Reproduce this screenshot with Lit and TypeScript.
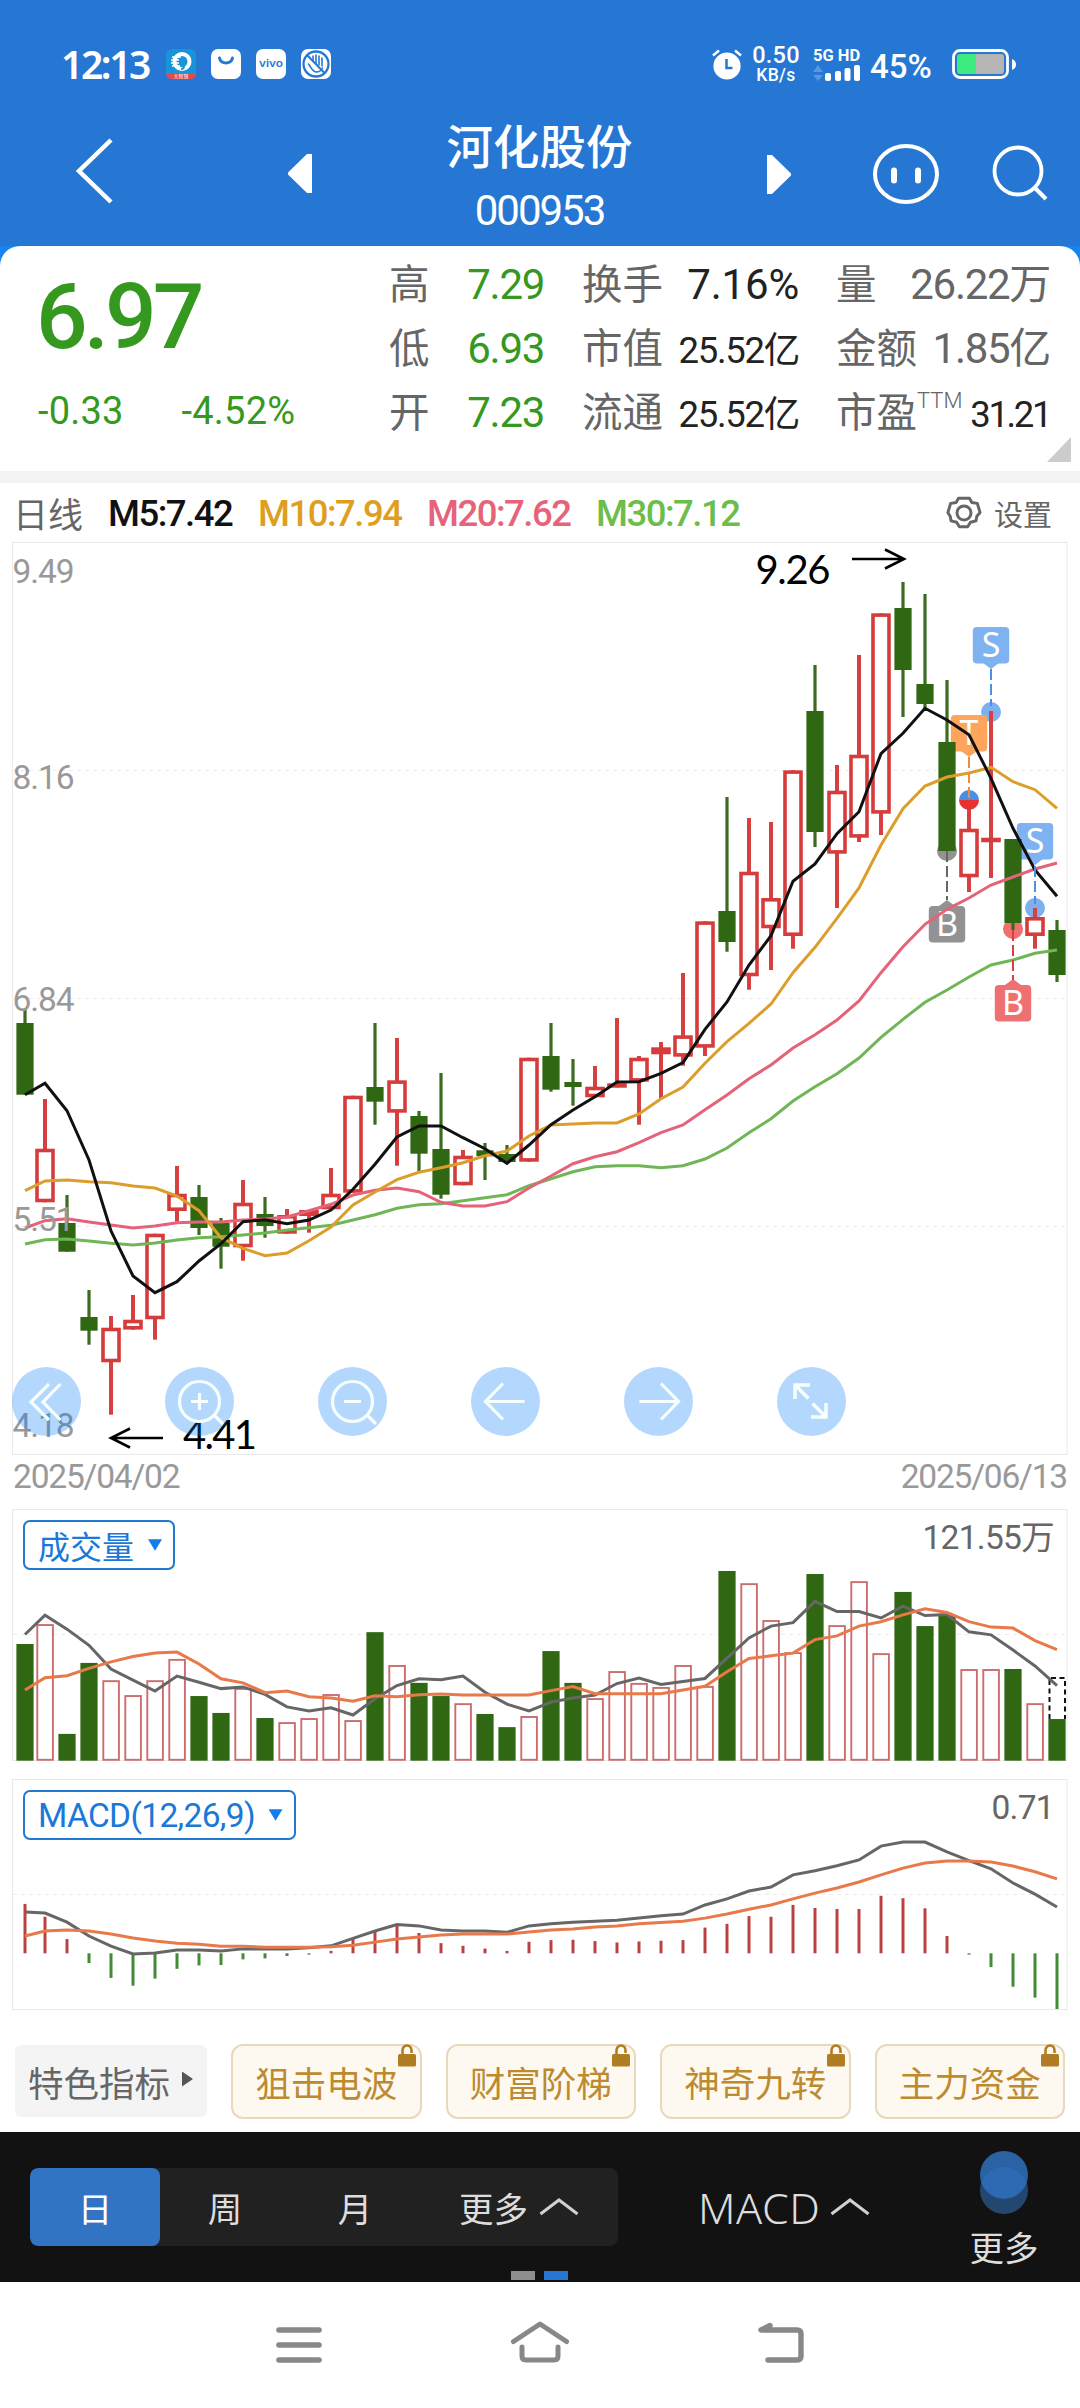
import { LitElement, html, svg, css } from "lit";
import { customElement, property } from "lit/decorators.js";
import { classMap } from "lit/directives/class-map.js";

type Candle = [up: 0 | 1, high: number, top: number, bottom: number, low: number];

const candles: Candle[] = [
  [0, 1009, 1023, 1094.7, 1094.7], [1, 1099, 1148.7, 1202.3, 1202.3], [0, 1195, 1223, 1251.7, 1251.7],
  [0, 1290, 1317, 1330.7, 1344.7], [1, 1316, 1327.7, 1362.3, 1414.7], [1, 1295, 1319.7, 1329.6, 1329.6],
  [1, 1233.7, 1233.7, 1319.3, 1339.7], [1, 1166, 1193.7, 1211, 1221.7], [0, 1185, 1197, 1228, 1235],
  [0, 1218, 1223, 1246.7, 1268.7], [1, 1180, 1202.7, 1247.3, 1260.7], [0, 1197, 1214, 1226, 1237.7],
  [1, 1209, 1215, 1233.7, 1233.7], [1, 1210, 1210, 1216, 1232.7], [1, 1168, 1193.7, 1209.3, 1209.3],
  [1, 1095.7, 1095.7, 1192.7, 1192.7], [0, 1023, 1087, 1101.7, 1124.7], [1, 1038, 1080.3, 1112.7, 1165.7],
  [0, 1111, 1116, 1153.7, 1171.7], [0, 1073, 1149, 1194.7, 1198.7], [1, 1150, 1155.7, 1185.3, 1185.3],
  [0, 1143, 1150.3, 1156.3, 1180], [0, 1145, 1154, 1162, 1162], [1, 1057.7, 1057.7, 1161.7, 1161.7],
  [0, 1023, 1056, 1089.7, 1091.7], [0, 1059, 1082, 1087, 1105.7], [1, 1066, 1086.7, 1097.3, 1097.3],
  [1, 1018, 1083.3, 1087.3, 1087.3], [1, 1056, 1057.7, 1081.7, 1124.7], [1, 1042, 1047.3, 1054.3, 1099],
  [1, 973, 1035.3, 1056.7, 1065.7], [1, 921.3, 921.3, 1047.7, 1056], [0, 797, 911, 942, 951.7],
  [1, 818, 871.7, 976.3, 989.7], [1, 822, 898, 928.3, 970], [1, 770.3, 770.3, 936, 948.7],
  [0, 665, 711, 832, 847], [1, 765, 790.7, 853.7, 908], [1, 655, 754.7, 837.7, 842],
  [1, 613.3, 613.3, 813.7, 835], [0, 582, 608, 670, 717], [0, 594, 684, 704, 708],
  [0, 680, 742, 851, 851], [1, 808, 828.7, 877.3, 892], [1, 711, 837.7, 842.3, 878],
  [0, 839, 839, 923, 930], [1, 908, 917, 936, 948.7], [0, 920, 930, 975, 982],
];

const averages: [color: string, values: number[]][] = [
  ["#6fb657", [1244, 1239.7, 1239, 1241, 1243.3, 1245, 1243, 1240, 1237.7, 1236.7, 1235, 1233, 1230, 1227.7, 1225.3, 1220, 1214.7, 1208.3, 1204.7, 1203.7, 1200.7, 1197.7, 1194.7, 1185.7, 1178.7, 1171.7, 1166.7, 1165.7, 1165.7, 1167.7, 1165.7, 1159, 1148, 1132.7, 1118.7, 1101, 1086.7, 1073.7, 1058, 1037.3, 1019.3, 1002.3, 990, 977, 965, 960, 953.3, 950]],
  ["#e4637a", [1228, 1220.7, 1218.7, 1222, 1225, 1228, 1226, 1222.7, 1222, 1222, 1220, 1219, 1217, 1210.7, 1204.3, 1195, 1190.3, 1188, 1191.7, 1202.3, 1206, 1206, 1201.7, 1188, 1176, 1163.7, 1156.7, 1151.7, 1142.7, 1132.7, 1125, 1109.7, 1095, 1078.7, 1065, 1048, 1034.7, 1020, 1001, 972.7, 946.7, 924.3, 909.3, 898, 885, 877, 869, 863]],
  ["#dc9e2b", [1190.7, 1181, 1180, 1181.7, 1182.7, 1186, 1188, 1196, 1210.7, 1237.7, 1248.3, 1255.7, 1253, 1240.7, 1227, 1205, 1192, 1179.7, 1172.3, 1167.7, 1162.7, 1155.7, 1151, 1136, 1125, 1124, 1123, 1123, 1114, 1098.7, 1087, 1063.3, 1041.7, 1023.3, 1004, 972.7, 947.3, 918.3, 888, 845, 808.7, 786, 777, 773, 767.3, 781.7, 789.7, 808.3]],
  ["#111111", [1094.7, 1083.3, 1110.7, 1160, 1231, 1276, 1292.7, 1281.7, 1261, 1243.7, 1221.7, 1219.7, 1223.7, 1220, 1210, 1189.3, 1164.3, 1137, 1126, 1126, 1137.7, 1148.7, 1163.3, 1145, 1124.7, 1110, 1096.7, 1082, 1081.7, 1073.3, 1062.7, 1029.3, 1002, 965, 935.7, 881.3, 864, 833.7, 811.7, 753.7, 733.3, 708.3, 720, 734.7, 778.3, 828.3, 870, 896.3]],
];

/* The lower panes are sampled on a finer vertical grid; STEP turns a sample into pixels. */
const STEP = 1 / 2.9585;
const volumeTops = [426, 367, 692, 482, 533, 577, 533, 470, 580, 630, 556, 645, 657, 645, 574, 651, 391, 488, 541, 580, 601, 633, 672, 639, 447, 541, 586, 506, 541, 553, 488, 550, 210, 246, 355, 450, 219, 370, 240, 453, 272, 373, 341, 500, 500, 500, 601, 648];
const volumeFast = [398, 341, 382, 430, 500, 533, 565, 521, 539, 558, 553, 575, 612, 624, 615, 636, 588, 549, 529, 532, 521, 569, 604, 624, 598, 586, 577, 543, 527, 546, 537, 528, 468, 408, 373, 363, 300, 330, 330, 349, 314, 342, 339, 390, 399, 444, 491, 549];
const volumeSlow = [562, 526, 520, 498, 479, 463, 453, 450, 485, 529, 541, 570, 565, 582, 586, 595, 579, 582, 576, 574, 577, 577, 577, 577, 564, 552, 573, 573, 573, 573, 562, 551, 508, 469, 461, 453, 413, 402, 373, 360, 340, 322, 333, 360, 376, 379, 416, 443];
const macdBars = [1195, 1233, 1299, 1370, 1414, 1437, 1416, 1387, 1377, 1376, 1359, 1356, 1349, 1345, 1334, 1297, 1275, 1259, 1281, 1311, 1319, 1327, 1334, 1307, 1302, 1301, 1305, 1309, 1306, 1304, 1302, 1265, 1254, 1231, 1233, 1198, 1207, 1210, 1210, 1171, 1178, 1208, 1290, 1345, 1382, 1440, 1472, 1506];
const macdDif = [1219, 1222, 1249, 1290, 1320, 1343, 1340, 1331, 1331, 1334, 1328, 1328, 1328, 1325, 1319, 1297, 1275, 1256, 1260, 1272, 1275, 1275, 1279, 1260, 1254, 1249, 1246, 1243, 1237, 1230, 1225, 1198, 1180, 1157, 1145, 1109, 1097, 1082, 1065, 1024, 1012, 1012, 1041, 1067, 1091, 1133, 1166, 1204];
const macdDea = [1290, 1275, 1272, 1275, 1284, 1296, 1305, 1311, 1314, 1320, 1320, 1323, 1323, 1323, 1322, 1317, 1308, 1299, 1293, 1287, 1284, 1284, 1284, 1278, 1272, 1269, 1263, 1260, 1254, 1250, 1246, 1237, 1225, 1211, 1198, 1180, 1163, 1148, 1130, 1109, 1089, 1074, 1068, 1068, 1071, 1083, 1100, 1121];

const xAt = (i: number) => (i === 0 ? 25 : 23 + 22 * i);
const points = (values: number[], k = 1) => values.map((v, i) => `${xAt(i)},${v * k}`).join(" ");
const line = (values: number[], color: string, k = 1) =>
  svg`<polyline points=${points(values, k)} fill="none" stroke=${color} stroke-width="3" />`;
const frame = (top: number, bottom: number, grid: number[]) => svg`
  <rect x="12.5" y=${top} width="1054.5" height=${bottom - top} fill="none" stroke="#eaeaea" />
  ${grid.map((y) => svg`<line x1="13" x2="1067" y1=${y} y2=${y} stroke="#ececec" stroke-dasharray="4 4" />`)}`;

@customElement("status-bar")
export class StatusBar extends LitElement {
  static styles = css`
    :host { display: flex; height: 80px; padding: 24px 64px 0 61px; align-items: center; justify-content: space-between; color: #fff; font-family: Roboto, "Liberation Sans", sans-serif; box-sizing: content-box; }
    .side { display: flex; align-items: center; }
    .time { font: 600 39px "Noto Sans", sans-serif; line-height: 40px; letter-spacing: -2.4px; width: 105px; white-space: nowrap; }
    .apps { display: flex; gap: 15px; }
    .speed { width: 50px; margin-left: 9px; text-align: center; font-weight: 500; white-space: nowrap; }
    .rate { font-size: 23.5px; line-height: 20px; letter-spacing: 0.2px; }
    .unit { font-size: 17.5px; line-height: 18px; letter-spacing: 0.4px; margin-top: 1px; }
    .net { margin: 0 7px 0 12px; width: 50px; }
    .gen { font-size: 16.5px; line-height: 17px; font-weight: 700; white-space: nowrap; }
    .bars { display: block; }
    .pct { font-size: 33px; font-weight: 500; width: 82px; line-height: 33px; padding-top: 4px; letter-spacing: 0; }
    svg { display: block; }
  `;
  render() {
    return html`
      <div class="side">
        <span class="time">12:13</span>
        <div class="apps">
          <svg width="30" height="30" viewBox="0 0 30 30">
            <rect width="30" height="30" rx="6" fill="#1a94d8" />
            <path d="M0 24h30v0q0 6-6 6H6q-6 0-6-6z" fill="#e54a4c" />
            <circle cx="16" cy="12.500" r="7.500" fill="none" stroke="#fff" stroke-width="4" />
            <path d="M6 8h9M5 11h8M5 14h8M6 17h8" stroke="#fff" stroke-width="1.300" />
            <path d="M18 8v9q0 3-3 3" fill="none" stroke="#1a94d8" stroke-width="2" />
            <text x="15" y="28.600" font-size="5" fill="#fff" text-anchor="middle" font-family="Noto Sans CJK SC">大智慧</text>
          </svg>
          <svg width="30" height="30" viewBox="0 0 30 30"><rect width="30" height="30" rx="7" fill="#fff" /><path d="M8.500 9c1 6.500 12 6.500 13 0" fill="none" stroke="#2677d4" stroke-width="3" stroke-linecap="round" /></svg>
          <svg width="30" height="30" viewBox="0 0 30 30"><rect width="30" height="30" rx="7" fill="#fff" /><text x="15" y="18" font-size="10" textLength="24" lengthAdjust="spacingAndGlyphs" fill="#2677d4" font-weight="600" text-anchor="middle" font-family="Inter">vivo</text></svg>
          <svg width="30" height="30" viewBox="0 0 30 30"><rect width="30" height="30" rx="7" fill="#fff" /><circle cx="15" cy="15" r="12.500" fill="none" stroke="#2677d4" stroke-width="2.300" /><path d="M6.500 6.500L23 23.500" stroke="#2677d4" stroke-width="2" /><path d="M12 7v5M15 6v9M18 7v9M21 9v8M7.500 15c3 4 4 8 8 8 3 0 5-2 6-4" fill="none" stroke="#2677d4" stroke-width="1.600" stroke-linecap="round" /></svg>
        </div>
      </div>
      <div class="side">
        <svg width="30" height="32" viewBox="0 0 30 32"><circle cx="15" cy="18" r="13.600" fill="#fff" /><path d="M1 7.500L7 2.500M29 7.500L23 2.500" stroke="#fff" stroke-width="2.500" /><path d="M14.500 11v9h6" fill="none" stroke="#2677d4" stroke-width="2.500" /></svg>
        <div class="speed"><div class="rate">0.50</div><div class="unit">KB/s</div></div>
        <div class="net">
          <div class="gen">5G HD</div>
          <svg class="bars" width="48" height="18" viewBox="0 0 48 18"><path d="M5 1l5 7H0zM5 17l5-6H0z" fill="#5896de" /><rect x="12" y="9" width="6" height="8" rx="2" fill="#fff" /><rect x="22" y="7" width="6" height="10" rx="2" fill="#fff" /><rect x="31.500" y="4" width="6" height="13" rx="2" fill="#fff" /><rect x="41" y="1" width="6" height="16" rx="2" fill="#fff" /></svg>
        </div>
        <span class="pct">45%</span>
        <svg width="64" height="32" viewBox="0 0 64 32"><rect x="1.500" y="2.500" width="54" height="27" rx="6.500" fill="none" stroke="#fff" stroke-width="2.800" /><path d="M8 6h16v20H8q-3 0-3-3V9q0-3 3-3z" fill="#3dea80" /><path d="M24 6h25q3 0 3 3v14q0 3-3 3H24z" fill="#b5b5b5" /><path d="M60 11q4 1.500 4 5.500t-4 5.500z" fill="#fff" /></svg>
      </div>`;
  }
}

@customElement("stock-header")
export class StockHeader extends LitElement {
  static styles = css`
    :host { display: flex; align-items: flex-start; padding: 0 31px 0 76px; height: 142px; color: #fff; }
    svg { display: block; flex: none; }
    .back { margin-top: 34px; }
    .prev { margin: 50px 0 0 174px; }
    .title { width: 456px; display: flex; flex-direction: column; align-items: center; font-family: "Noto Sans CJK SC", sans-serif; }
    .name { font-size: 46.5px; font-weight: 500; line-height: 46px; margin-top: 17px; }
    .code { font: 400 42px Roboto, sans-serif; line-height: 42px; letter-spacing: -2px; margin-top: 23px; }
    .next { margin-top: 51px; }
    .bot { margin: 38px 0 0 81px; }
    .find { margin: 41px 0 0 51px; }
  `;
  render() {
    return html`
      <svg class="back" width="38" height="66" viewBox="0 0 38 66"><path d="M35 2L3 33l32 31" fill="none" stroke="#fff" stroke-width="4.500" /></svg>
      <svg class="prev" width="24" height="39" viewBox="0 0 24 39"><path d="M24 0v39H19L0 20.500v-2L19 0z" fill="#fff" /></svg>
      <div class="title"><span class="name">河化股份</span><span class="code">000953</span></div>
      <svg class="next" width="24" height="39" viewBox="0 0 24 39"><path d="M0 0v39H5L24 20.500v-2L5 0z" fill="#fff" /></svg>
      <svg class="bot" width="68" height="64" viewBox="0 0 68 64"><ellipse cx="34" cy="32" rx="31" ry="28" fill="none" stroke="#fff" stroke-width="4" /><path d="M22 28.500v10M46 28.500v10" stroke="#fff" stroke-width="6" stroke-linecap="round" /></svg>
      <svg class="find" width="58" height="58" viewBox="0 0 58 58"><circle cx="27" cy="26" r="23.500" fill="none" stroke="#fff" stroke-width="3.800" /><path d="M43 42L55 54" stroke="#fff" stroke-width="4" /></svg>`;
  }
}

@customElement("quote-panel")
export class QuotePanel extends LitElement {
  static styles = css`
    :host { display: flex; position: relative; height: 225px; box-sizing: border-box; padding: 4px 30px 0 38px; background: #fff; border-radius: 20px 20px 0 0; font-family: Roboto, "Noto Sans CJK SC", sans-serif; }
    .last { width: 351px; color: #35991f; display: flex; flex-direction: column; }
    .price { font-size: 91px; line-height: 91px; font-weight: 500; letter-spacing: -4px; margin-top: 22px; margin-left: -2px; }
    .delta { display: flex; gap: 58px; font-size: 38px; line-height: 44px; margin-top: 26px; letter-spacing: 0.2px; }
    .cols { display: flex; flex: 1; }
    .col { display: flex; flex-direction: column; }
    .a { width: 155px; margin-right: 38px; }
    .b { width: 217px; margin-right: 37px; }
    .c { flex: 1; }
    .row { display: flex; height: 64px; align-items: baseline; justify-content: space-between; line-height: 64px; white-space: nowrap; }
    .label { color: #666; font: 400 40.5px "Noto Sans CJK SC", sans-serif; line-height: 64px; }
    .label sup { font: 300 22px Roboto, sans-serif; vertical-align: 19px; line-height: 0; color: #666; }
    .value { font-size: 42px; letter-spacing: -1.3px; color: #222; }
    .green { color: #35991f; }
    .gray { color: #666; }
    .wide { letter-spacing: -0.2px; }
    .small { font-size: 36.5px; letter-spacing: -1.3px; }
    .tight { font-size: 36.5px; letter-spacing: -2.4px; }
    .fold { position: absolute; right: 9px; bottom: 9px; width: 24px; height: 25px; background: #ccc; clip-path: polygon(100% 0, 100% 100%, 0 100%); }
  `;
  private row(label: unknown, value: string, tone: string, fit = "") {
    return html`<div class="row"><span class="label">${label}</span><span class="value ${tone} ${fit}">${value}</span></div>`;
  }
  render() {
    return html`
      <div class="last"><span class="price">6.97</span><div class="delta"><span>-0.33</span><span>-4.52%</span></div></div>
      <div class="cols">
        <div class="col a">${this.row("高", "7.29", "green")}${this.row("低", "6.93", "green")}${this.row("开", "7.23", "green")}</div>
        <div class="col b">${this.row("换手", "7.16%", "dark", "wide")}${this.row("市值", "25.52亿", "dark", "small")}${this.row("流通", "25.52亿", "dark", "small")}</div>
        <div class="col c">${this.row("量", "26.22万", "gray")}${this.row("金额", "1.85亿", "gray")}${this.row(html`市盈<sup>TTM</sup>`, "31.21", "dark", "tight")}</div>
      </div>
      <div class="fold"></div>`;
  }
}

@customElement("average-legend")
export class AverageLegend extends LitElement {
  static styles = css`
    :host { display: flex; align-items: center; height: 57px; padding: 1px 28px 0 13px; border-top: 12px solid #f4f4f4; font-family: Roboto, "Noto Sans CJK SC", sans-serif; box-sizing: content-box; }
    .kind { color: #666; font-size: 35px; width: 95px; }
    .ma { font-size: 36.5px; font-weight: 500; letter-spacing: -1.5px; white-space: nowrap; padding-top: 2px; }
    .m5 { color: #111; width: 150px; }
    .m10 { color: #df9e1d; width: 169px; }
    .m20 { color: #e6637a; width: 169px; }
    .m30 { color: #6dbd4b; flex: 1; }
    .set { display: flex; align-items: center; gap: 11px; color: #666; font-size: 29px; }
  `;
  render() {
    return html`
      <span class="kind">日线</span>
      <span class="ma m5">M5:7.42</span><span class="ma m10">M10:7.94</span><span class="ma m20">M20:7.62</span><span class="ma m30">M30:7.12</span>
      <div class="set">
        <svg width="38" height="36" viewBox="0 0 38 36"><path d="M13 2.500h12l2.500 4.500 6 1 3 10-3.500 4-1 5-6 1.500-3 5H14l-3-5-6-1.500-1-5L1.500 18l3-10 6-1z" transform="translate(1.500 1) scale(.92)" fill="none" stroke="#666" stroke-width="3.200" stroke-linejoin="round" /><circle cx="19" cy="18" r="7" fill="none" stroke="#666" stroke-width="3" /></svg>
        <span>设置</span>
      </div>`;
  }
}

@customElement("price-chart")
export class PriceChart extends LitElement {
  static styles = css`
    :host { display: block; position: relative; height: 955px; }
    svg { display: block; }
    .axis { font: 400 33.5px Roboto, sans-serif; fill: #999; }
    .peak { font: 400 40px Lato, sans-serif; fill: #000; }
    .flag { font: 400 34px "Noto Sans", sans-serif; fill: #fff; text-anchor: middle; }
    .tools { position: absolute; left: 12px; top: 826px; display: flex; gap: 84px; }
    .tool { width: 69px; height: 69px; border-radius: 50%; background: rgba(0, 122, 247, 0.294); }
    .dates { position: relative; display: flex; justify-content: space-between; padding: 0 13px 0 13px; margin-top: -39px; font: 400 33.5px Roboto, sans-serif; line-height: 40px; letter-spacing: -1.2px; color: #999; }
  `;
  private candle([up, high, top, bottom, low]: Candle, i: number) {
    const x = xAt(i);
    if (!up) {
      return svg`<line x1=${x} x2=${x} y1=${high} y2=${low} stroke="#3a6b1e" stroke-width="3.200" />
        <rect x=${x - 8.6} y=${top} width="17.200" height=${bottom - top} fill="#306713" />`;
    }
    return svg`<line x1=${x} x2=${x} y1=${high} y2=${top + 2} stroke="#d64040" stroke-width="4" />
      <line x1=${x} x2=${x} y1=${bottom - 2} y2=${low} stroke="#d64040" stroke-width="4" />
      <rect x=${x - 8} y=${top + 1.8} width="16" height=${Math.max(bottom - top - 3.6, 0.8)} fill=${bottom - top < 8 ? "#ea4444" : "#fff"} stroke="#d63c3c" stroke-width="3.600" />`;
  }
  private flag(x: number, y: number, letter: string, color: string, below = false) {
    const tip = below ? `M${x - 8} ${y}l8-6 8 6z` : `M${x - 8} ${y + 36}l8 6 8-6z`;
    return svg`<rect x=${x - 18.2} y=${y} width="36.400" height="36.400" rx="4" fill=${color} /><path d=${tip} fill=${color} />
      <text class="flag" x=${x} y=${y + 30}>${letter}</text>`;
  }
  private dash(x: number, y1: number, y2: number, color: string) {
    return svg`<line x1=${x} x2=${x} y1=${y1} y2=${y2} stroke=${color} stroke-width="2" stroke-dasharray="11 4" />`;
  }
  private icons = [
    svg`<path d="M37 17L19 35l18 18M48.500 17L31 35l17.500 18" />`,
    svg`<circle cx="34.500" cy="34.500" r="20" /><path d="M49 48l9 9M26 34.500h17M34.500 26v17" />`,
    svg`<circle cx="34.500" cy="34.500" r="20" /><path d="M49 48l9 9M26 34.500h17" />`,
    svg`<path d="M32 16.500L14.500 34.500 32 52.500M14.500 34.500h39" />`,
    svg`<path d="M37 16.500L54.500 34.500 37 52.500M54.500 34.500h-39" />`,
    svg`<path d="M33 18H18v14M18 18l13.500 13.500M34 50h15V36M49 50L35.500 36.500" stroke-width="3.500" />`,
  ];
  render() {
    const axis: [number, string][] = [[583, "9.49"], [789, "8.16"], [1010.7, "6.84"], [1231, "5.51"], [1437.3, "4.18"]];
    return html`
      <svg width="1080" height="955" viewBox="0 541 1080 955">
        ${frame(542.5, 1454.5, [770.5, 998.5, 1226.5])}
        <circle cx="991" cy="712" r="10" fill="#7fb0ee" /><circle cx="1035" cy="908" r="10" fill="#7fb0ee" />
        <circle cx="947" cy="851" r="10" fill="#929292" /><circle cx="1013" cy="929" r="10" fill="#ef7070" />
        ${this.flag(991, 627, "S", "#7fb2f0")}${this.flag(1035, 823, "S", "#7fb2f0")}${this.flag(969, 715, "T", "#fda55c")}
        ${this.flag(947, 906, "B", "#929292", true)}${this.flag(1013, 985, "B", "#ef7070", true)}
        ${candles.map((c, i) => this.candle(c, i))}
        <path d="M959 800a10 10 0 0 1 20 0z" fill="#4a90e2" /><path d="M959 800a10 10 0 0 0 20 0z" fill="#e63232" />
        ${averages.map(([color, values]) => line(values, color))}
        ${this.dash(991, 669, 706, "#4a90e2")}${this.dash(1035, 866, 904, "#4a90e2")}${this.dash(969, 757, 799, "#f28a3c")}
        ${this.dash(947, 851, 900, "#666")}${this.dash(1013, 930, 980, "#d64040")}
        ${axis.map(([y, label]) => svg`<text class="axis" x="12.500" y=${y} textLength="62">${label}</text>`)}
        <text class="peak" x="755.500" y="583.500" textLength="75">9.26</text>
        <text class="peak" x="183" y="1449" textLength="74">4.41</text>
        <path d="M852 559h51M885 549.500l19 9.500-19 9.500M163 1438h-51M130 1428.500l-19 9.500 19 9.500" fill="none" stroke="#000" stroke-width="2.600" />
      </svg>
      <div class="dates"><span>2025/04/02</span><span>2025/06/13</span></div>
      <div class="tools">
        ${this.icons.map((icon) => html`<div class="tool"><svg width="69" height="69" viewBox="0 0 69 69" fill="none" stroke="#f6fffe" stroke-width="3.200">${icon}</svg></div>`)}
      </div>`;
  }
}

@customElement("indicator-pane")
export class IndicatorPane extends LitElement {
  static styles = css`
    :host { display: block; position: relative; }
    svg { display: block; }
    .pick { position: absolute; left: 23px; top: 11px; height: 50px; box-sizing: border-box; display: flex; align-items: center; gap: 14px; padding: 0 11px 0 13px; border: 2px solid #2078cf; border-radius: 7px; color: #1a78d8; font: 400 32px Roboto, "Noto Sans CJK SC", sans-serif; white-space: nowrap; }
    .macd .pick { font-size: 33.5px; letter-spacing: -0.65px; gap: 13.5px; }
    .tri { width: 14px; height: 11.5px; background: #127eed; clip-path: polygon(0 0, 100% 0, 50% 100%); }
    .max { position: absolute; right: 26px; top: 9px; font: 400 33.5px Roboto, "Noto Sans CJK SC", sans-serif; line-height: 40px; letter-spacing: -0.7px; color: #666; }
  `;
  @property() kind: "volume" | "macd" = "volume";
  private volume() {
    return html`<svg width="1080" height="270" viewBox="0 9 1080 270">
      ${frame(9.5, 260.5, [134.5])}
      ${volumeTops.map((v, i) => {
        const y = v * STEP;
        return candles[i][0]
          ? svg`<rect x=${xAt(i) - 7.7} y=${y + 1} width="15.600" height=${258.8 - y} fill="#fff" stroke="#cb6d6d" stroke-width="1.900" />`
          : svg`<rect x=${xAt(i) - 8.6} y=${y} width="17.200" height=${260.7 - y} fill="#306713" />`;
      })}
      <path d="M1049.500 219v-41h15.500v41" fill="none" stroke="#111" stroke-width="2" stroke-dasharray="5 3.500" />
      ${line(volumeFast, "#666", STEP)}${line(volumeSlow, "#e8794a", STEP)}
    </svg>`;
  }
  private macd() {
    return html`<svg width="1080" height="231" viewBox="0 279 1080 231">
      ${frame(279.5, 509.5, [394.5])}
      ${macdBars.map((v, i) => svg`<line x1=${xAt(i)} x2=${xAt(i)} y1="453.300" y2=${v * STEP} stroke=${v < 1341 ? "#bd4040" : "#438b35"} stroke-width="3" />`)}
      ${line(macdDif, "#666", STEP)}${line(macdDea, "#e8794a", STEP)}
    </svg>`;
  }
  render() {
    const isMacd = this.kind === "macd";
    return html`<div class=${classMap({ macd: isMacd })}>
      ${isMacd ? this.macd() : this.volume()}
      <div class="pick"><span>${isMacd ? "MACD(12,26,9)" : "成交量"}</span><i class="tri"></i></div>
      <span class="max">${isMacd ? "0.71" : "121.55万"}</span>
    </div>`;
  }
}

@customElement("feature-chips")
export class FeatureChips extends LitElement {
  static styles = css`
    :host { display: flex; align-items: center; height: 122px; padding: 21px 15px 0; gap: 24px; box-sizing: border-box; font-family: "Noto Sans CJK SC", sans-serif; font-size: 35.5px; }
    .chip { position: relative; flex: 1; height: 75px; box-sizing: border-box; display: flex; align-items: center; justify-content: center; border: 2px solid #e9d8bb; border-radius: 12px; background: #fdf9f1; color: #be8a30; white-space: nowrap; }
    .lead { width: 192px; height: 72px; box-sizing: border-box; display: flex; align-items: center; gap: 12px; padding-left: 13px; background: #f4f4f4; border-radius: 6px; color: #666; white-space: nowrap; margin-top: -1px; }
    .arrow { width: 11px; height: 15px; background: #555; clip-path: polygon(0 0, 100% 50%, 0 100%); margin-top: -4px; }
    .lock { position: absolute; right: 4px; top: -2px; }
  `;
  render() {
    return html`
      <div class="lead"><span>特色指标</span><i class="arrow"></i></div>
      ${["狙击电波", "财富阶梯", "神奇九转", "主力资金"].map(
        (name) => html`<div class="chip">${name}<svg class="lock" width="18" height="23" viewBox="0 0 18 23"><path d="M4.500 11V6.500a4.500 5 0 0 1 9 0V9" fill="none" stroke="#b07d22" stroke-width="2.600" /><rect y="10" width="18" height="12.500" rx="1.500" fill="#b07d22" /></svg></div>`,
      )}`;
  }
}

@customElement("period-bar")
export class PeriodBar extends LitElement {
  static styles = css`
    :host { display: flex; position: relative; height: 150px; background: #121212; color: #ddd; font: 400 34.5px "Noto Sans CJK SC", sans-serif; padding-left: 30px; }
    .tabs { display: flex; width: 588px; height: 78px; margin-top: 36px; border-radius: 8px; background: #212121; overflow: hidden; }
    .tab { width: 130px; display: flex; align-items: center; justify-content: center; gap: 11px; line-height: 77px; }
    .on { background: #3174c4; color: #fff; border-radius: 8px; }
    .wide { width: 198px; }
    .macd { display: flex; align-items: center; gap: 9px; height: 78px; margin: 36px 0 0 80px; font: 300 43px "Noto Sans", sans-serif; letter-spacing: 0.6px; width: 172px; white-space: nowrap; }
    .more { margin-left: 94px; width: 80px; display: flex; flex-direction: column; align-items: center; padding-top: 17px; }
    svg { display: block; flex: none; }
    .word { line-height: 40px; margin-top: 11px; }
    .pager { position: absolute; left: 511px; bottom: 2px; display: flex; gap: 9px; }
    .dot { width: 24px; height: 9px; background: #8e8e8e; }
    .blue { background: #2677d4; }
  `;
  private chevron() {
    return html`<svg width="40" height="20" viewBox="0 0 40 20"><path d="M1.500 17L20 3l18.500 14" fill="none" stroke="#d0d0d0" stroke-width="3" /></svg>`;
  }
  render() {
    return html`
      <div class="tabs">
        <span class="tab on">日</span><span class="tab">周</span><span class="tab">月</span>
        <span class="tab wide">更多${this.chevron()}</span>
      </div>
      <div class="macd">MACD${this.chevron()}</div>
      <div class="more">
        <svg width="48" height="66" viewBox="0 0 48 66"><circle cx="24" cy="41" r="24" fill="#23476f" /><circle cx="24" cy="26" r="24" fill="#2a62a4" /><path d="M1.500 33.500a24 24 0 0 1 45 0a24 24 0 0 1-45 0z" fill="#2d6ab3" /></svg>
        <span class="word">更多</span>
      </div>
      <div class="pager"><i class="dot"></i><i class="dot blue"></i></div>`;
  }
}

@customElement("system-nav")
export class SystemNav extends LitElement {
  static styles = css`
    :host { display: flex; height: 126px; padding-top: 38px; box-sizing: border-box; justify-content: center; gap: 186px; background: #fff; }
  `;
  render() {
    return html`
      <svg width="50" height="46" viewBox="0 0 50 46"><path d="M5 10h40M5 25h40M5 40h40" stroke="#888" stroke-width="5.600" stroke-linecap="round" /></svg>
      <svg width="60" height="46" viewBox="0 0 60 46"><path d="M3.500 21.500L30 4l26.500 17.500" fill="none" stroke="#888" stroke-width="5" stroke-linecap="round" stroke-linejoin="round" /><path d="M12 27v9q0 4 4 4h28q4 0 4-4v-9" fill="none" stroke="#888" stroke-width="5" stroke-linecap="round" /></svg>
      <svg width="50" height="46" viewBox="0 0 50 46"><path d="M14 5.500L5 10h36q4 0 4 4v22q0 4-4 4H12" fill="none" stroke="#888" stroke-width="5.400" stroke-linecap="round" stroke-linejoin="round" /></svg>`;
  }
}

@customElement("app-root")
export class AppRoot extends LitElement {
  static styles = css`
    :host { display: flex; flex-direction: column; width: 1080px; height: 2408px; overflow: hidden; background: #fff; }
    .top { background: #2677d4; height: 246px; }
    .sheet { background: #1583f2; }
    .first { margin-top: 13px; }
  `;
  render() {
    return html`
      <div class="top"><status-bar></status-bar><stock-header></stock-header></div>
      <div class="sheet"><quote-panel></quote-panel></div>
      <average-legend></average-legend>
      <price-chart></price-chart>
      <indicator-pane class="first" kind="volume"></indicator-pane>
      <indicator-pane kind="macd"></indicator-pane>
      <feature-chips></feature-chips>
      <period-bar></period-bar>
      <system-nav></system-nav>`;
  }
}
